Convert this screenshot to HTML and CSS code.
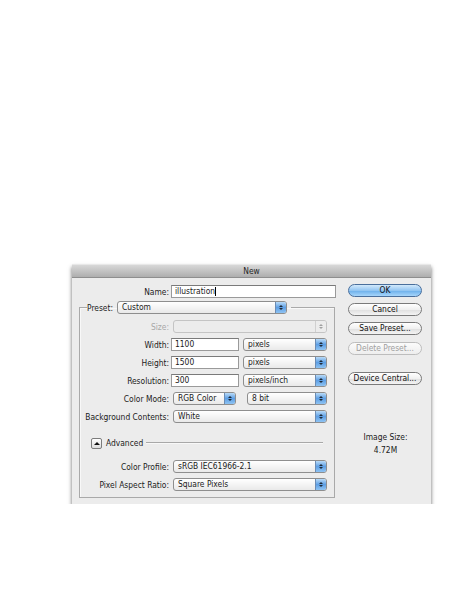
FILE: index.html
```html
<!DOCTYPE html>
<html lang="en">
  <head>
    <meta charset="UTF-8" />
    <title>New</title>
    <link rel="stylesheet" href="styles.css">
  </head>
  <body>
    <div class="dialog">
      <div class="titlebar">New</div>
      <div class="content">
        <div class="main">
          <div class="name-row">
            <label class="name-label">Name:</label>
            <div class="textfield name-field">illustration<span class="caret"></span></div>
          </div>

          <fieldset class="preset-box">
            <legend>
              <span class="legend-label">Preset:</span>
              <div class="popup preset-popup">
                <span class="popup-text">Custom</span>
                <span class="popup-arrows"><i class="up"></i><i class="down"></i></span>
              </div>
            </legend>

            <div class="row disabled">
              <label>Size:</label>
              <div class="popup wide off">
                <span class="popup-text"></span>
                <span class="popup-arrows"><i class="up"></i><i class="down"></i></span>
              </div>
            </div>
            <div class="row">
              <label>Width:</label>
              <div class="textfield num">1100</div>
              <div class="popup unit">
                <span class="popup-text">pixels</span>
                <span class="popup-arrows"><i class="up"></i><i class="down"></i></span>
              </div>
            </div>
            <div class="row">
              <label>Height:</label>
              <div class="textfield num">1500</div>
              <div class="popup unit">
                <span class="popup-text">pixels</span>
                <span class="popup-arrows"><i class="up"></i><i class="down"></i></span>
              </div>
            </div>
            <div class="row">
              <label>Resolution:</label>
              <div class="textfield num">300</div>
              <div class="popup unit">
                <span class="popup-text">pixels/inch</span>
                <span class="popup-arrows"><i class="up"></i><i class="down"></i></span>
              </div>
            </div>
            <div class="row">
              <label>Color Mode:</label>
              <div class="popup mode">
                <span class="popup-text">RGB Color</span>
                <span class="popup-arrows"><i class="up"></i><i class="down"></i></span>
              </div>
              <div class="popup depth">
                <span class="popup-text">8 bit</span>
                <span class="popup-arrows"><i class="up"></i><i class="down"></i></span>
              </div>
            </div>
            <div class="row">
              <label>Background Contents:</label>
              <div class="popup wide">
                <span class="popup-text">White</span>
                <span class="popup-arrows"><i class="up"></i><i class="down"></i></span>
              </div>
            </div>

            <div class="advanced">
              <span class="disclosure"><i class="up"></i></span>
              <span class="advanced-label">Advanced</span>
              <span class="rule"></span>
            </div>

            <div class="row">
              <label>Color Profile:</label>
              <div class="popup wide">
                <span class="popup-text">sRGB IEC61966-2.1</span>
                <span class="popup-arrows"><i class="up"></i><i class="down"></i></span>
              </div>
            </div>
            <div class="row last">
              <label>Pixel Aspect Ratio:</label>
              <div class="popup wide">
                <span class="popup-text">Square Pixels</span>
                <span class="popup-arrows"><i class="up"></i><i class="down"></i></span>
              </div>
            </div>
          </fieldset>
        </div>

        <div class="side">
          <button class="btn default">OK</button>
          <button class="btn">Cancel</button>
          <button class="btn">Save Preset...</button>
          <button class="btn" disabled>Delete Preset...</button>
          <button class="btn central">Device Central...</button>
          <div class="image-size">
            <div>Image Size:</div>
            <div class="size-value">4.72M</div>
          </div>
        </div>
      </div>
    </div>
  </body>
</html>
```

FILE: styles.css
```css
body {
  margin: 0;
  background-color: #ffffff;
  font-family: "DejaVu Sans Condensed", "DejaVu Sans", sans-serif;
  font-size: 8.4px;
  color: #1a1a1a;
}

.dialog {
  width: 359px;
  height: 240px;
  margin: 264px 0 0 72px;
  background-color: #ececec;
  box-shadow: 0 3px 4px rgba(0, 0, 0, 0.6);
}

.titlebar {
  height: 14px;
  line-height: 13px;
  text-align: center;
  background: linear-gradient(#d8d8d8, #aeaeae);
  border-top: 1px solid #e8e8e8;
  border-bottom: 1px solid #8e8e8e;
  box-sizing: border-box;
  color: #262626;
}

.content {
  display: flex;
}

.main {
  width: 268px;
  padding-top: 7px;
}

/* name field above the preset group */
.name-row {
  display: flex;
  align-items: center;
  height: 13px;
}

.name-label {
  width: 97px;
  text-align: right;
}

.textfield {
  height: 13px;
  box-sizing: border-box;
  margin-left: 2px;
  padding-left: 3px;
  line-height: 11px;
  background-color: #ffffff;
  border: 1px solid #9a9a9a;
  border-top-color: #7a7a7a;
  display: flex;
  align-items: center;
}

.name-field {
  width: 165px;
}

.caret {
  display: inline-block;
  width: 1px;
  height: 9px;
  background-color: #000000;
}

.num {
  width: 68px;
}

.preset-box {
  width: 256px;
  box-sizing: border-box;
  margin: 3px 0 0 7px;
  padding: 6px 7px 6px 0;
  border: 1px solid #a9a9a9;
  box-shadow: inset 1px 1px 0 #f8f8f8;
}

.preset-box legend {
  display: flex;
  align-items: center;
  padding: 0 4px 0 0;
  margin-left: 7px;
}

.legend-label {
  padding-right: 4px;
}

.preset-popup {
  width: 170px;
}

.row {
  display: flex;
  align-items: center;
  height: 13px;
  margin-bottom: 5px;
}

.row.last {
  margin-bottom: 0;
}

.row label {
  width: 89px;
  text-align: right;
  white-space: nowrap;
}

.row .popup {
  margin-left: 4px;
}

.disabled label {
  color: #a8a8a8;
}

/* popup menus with the blue arrow cap */
.popup {
  display: flex;
  height: 13px;
  box-sizing: border-box;
  border: 1px solid #8e8e8e;
  border-radius: 3px;
  background: linear-gradient(#ffffff, #e9e9e9);
  overflow: hidden;
}

.popup-text {
  flex: 1;
  padding-left: 4px;
  line-height: 11px;
  white-space: nowrap;
}

.popup-arrows {
  width: 10px;
  display: flex;
  flex-direction: column;
  align-items: center;
  justify-content: center;
  gap: 1px;
  border-left: 1px solid #6b8cb4;
  background: linear-gradient(#b9dbf8, #5e9fe4 50%, #8ec3f3);
}

.up,
.down {
  display: block;
  width: 0;
  height: 0;
  border-left: 2px solid transparent;
  border-right: 2px solid transparent;
}

.up {
  border-bottom: 2px solid #1c2a3a;
}

.down {
  border-top: 2px solid #1c2a3a;
}

.wide {
  width: 154px;
}

.unit {
  width: 84px;
}

.mode {
  width: 63px;
}

.row .popup.depth {
  width: 80px;
  margin-left: 11px;
}

.popup.off {
  border-color: #c4c4c4;
  background: #ececec;
}

.popup.off .popup-arrows {
  background: #ececec;
  border-left-color: #d0d0d0;
}

.popup.off .up {
  border-bottom-color: #a0a0a0;
}

.popup.off .down {
  border-top-color: #a0a0a0;
}

/* advanced disclosure */
.advanced {
  display: flex;
  align-items: center;
  height: 12px;
  margin: 14px 0 11px 11px;
}

.disclosure {
  width: 11px;
  height: 11px;
  box-sizing: border-box;
  border: 1px solid #7c7c7c;
  border-radius: 2px;
  background: linear-gradient(#ffffff, #dcdcdc);
  display: flex;
  align-items: center;
  justify-content: center;
}

.disclosure .up {
  border-left-width: 3px;
  border-right-width: 3px;
  border-bottom-width: 3px;
  border-bottom-color: #111111;
}

.advanced-label {
  padding-left: 4px;
}

.rule {
  flex: 1;
  height: 1px;
  margin: 0 4px 0 3px;
  background-color: #a8a8a8;
  border-bottom: 1px solid #f8f8f8;
}

/* buttons on the right */
.side {
  width: 91px;
  padding-top: 6px;
  display: flex;
  flex-direction: column;
}

.btn {
  width: 74px;
  height: 13px;
  margin: 0 0 6px 8px;
  padding: 0;
  box-sizing: border-box;
  border: 1px solid #7a7a7a;
  border-radius: 7px;
  background: linear-gradient(#ffffff, #f0f0f0 50%, #dedede 51%, #f4f4f4);
  font-family: inherit;
  font-size: 8.4px;
  color: #111111;
  line-height: 11px;
}

.btn.default {
  border-color: #4a6f9c;
  background: linear-gradient(#d3e9fb, #93c6f2 50%, #6aaeea 51%, #a7d6fb);
}

.btn[disabled] {
  margin-top: 1px;
  color: #a0a0a0;
  border-color: #bdbdbd;
  background: linear-gradient(#fbfbfb, #eeeeee);
}

.btn.central {
  margin-top: 11px;
}

.image-size {
  margin-top: 40px;
  text-align: center;
  line-height: 12px;
}

.size-value {
  margin-top: 1px;
}
```
